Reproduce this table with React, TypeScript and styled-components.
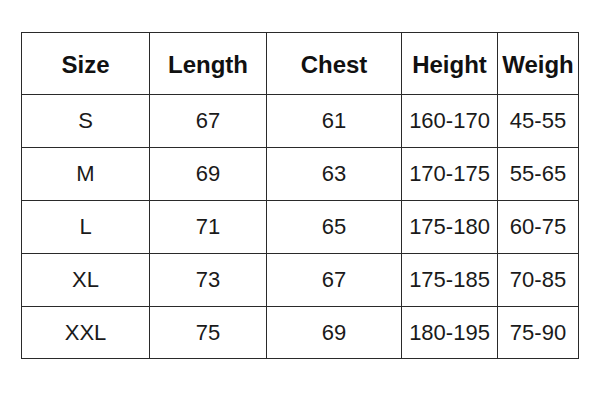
import React from 'react';
import styled, { createGlobalStyle } from 'styled-components';

const GlobalStyle = createGlobalStyle`
  html, body {
    margin: 0;
    padding: 0;
    background: #fff;
  }
  body {
    font-family: "Liberation Sans", Arial, Helvetica, sans-serif;
    color: #111;
  }
`;

const columns = [
  { key: 'size', label: 'Size', width: 128 },
  { key: 'length', label: 'Length', width: 117 },
  { key: 'chest', label: 'Chest', width: 135 },
  { key: 'height', label: 'Height', width: 96 },
  { key: 'weight', label: 'Weigh', width: 81 },
];

const rows = [
  ['S', '67', '61', '160-170', '45-55'],
  ['M', '69', '63', '170-175', '55-65'],
  ['L', '71', '65', '175-180', '60-75'],
  ['XL', '73', '67', '175-185', '70-85'],
  ['XXL', '75', '69', '180-195', '75-90'],
];

const Page = styled.div`
  padding: 32px 0 0 21px;
`;

const Table = styled.table`
  border-collapse: collapse;
  table-layout: fixed;
  width: 557px;
`;

const HeadCell = styled.th`
  height: 59px;
  padding: 2px 0 0;
  border: 1.5px solid #2a2a2a;
  font-size: 24px;
  font-weight: 700;
  text-align: center;
  vertical-align: middle;
  color: #111;
`;

const Cell = styled.td<{ $last?: boolean }>`
  height: ${p => (p.$last ? 51 : 52)}px;
  padding: 0;
  border: 1.5px solid #2a2a2a;
  font-size: 22px;
  text-align: center;
  vertical-align: middle;
  color: #1a1a1a;
  white-space: nowrap;
`;

export default function App() {
  return (
    <Page>
      <GlobalStyle />
      <Table>
        <colgroup>
          {columns.map(c => (
            <col key={c.key} style={{ width: c.width }} />
          ))}
        </colgroup>
        <thead>
          <tr>
            {columns.map(c => (
              <HeadCell key={c.key}>{c.label}</HeadCell>
            ))}
          </tr>
        </thead>
        <tbody>
          {rows.map((r, i) => (
            <tr key={r[0]}>
              {r.map((v, j) => (
                <Cell key={j} $last={i === rows.length - 1}>
                  {v}
                </Cell>
              ))}
            </tr>
          ))}
        </tbody>
      </Table>
    </Page>
  );
}
